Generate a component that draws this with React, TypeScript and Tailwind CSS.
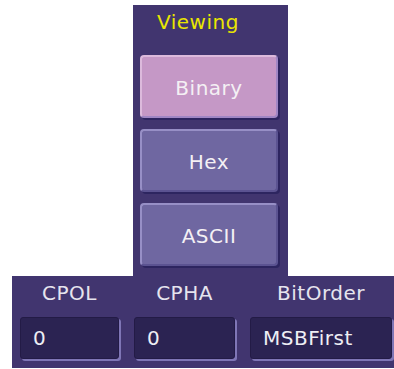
import React from 'react';

const font = { fontFamily: '"DejaVu Sans", Verdana, sans-serif' };

interface ModeButtonProps {
  label: string;
  active?: boolean;
}

const ModeButton: React.FC<ModeButtonProps> = ({ label, active }) => {
  const colors = active
    ? 'bg-[#c598c6] border-t-[#dcbadc] border-l-[#dcbadc] border-r-[#9f86c4] border-b-[#9f86c4]'
    : 'bg-[#6f67a1] border-t-[#978fc6] border-l-[#978fc6] border-r-[#5b5391] border-b-[#5b5391]';
  return (
    <div
      className={`h-[63px] w-[138px] rounded-[4px] border-2 ${colors} shadow-[2px_2px_0_#2d2560] flex items-center justify-center pt-[2px] text-[20px] tracking-[0.5px] text-[#f4f0f4]`}
    >
      {label}
    </div>
  );
};

interface FieldProps {
  label: string;
  value: string;
  width: string;
}

const Field: React.FC<FieldProps> = ({ label, value, width }) => (
  <div className={`${width} flex flex-col shrink-0`}>
    <div className="h-[34px] flex items-center justify-center text-[20px] tracking-[0.5px] text-[#e6e4ee]">
      {label}
    </div>
    <div className="mt-[7px] h-[42px] rounded-[3px] bg-[#2b2352] border border-[#231b46] shadow-[2px_2px_0_#7f76b6] flex items-center pl-[12px] text-[20px] tracking-[0.5px] text-[#eeeef4]">
      {value}
    </div>
  </div>
);

export default function App() {
  return (
    <div className="w-[394px] h-[369px] bg-white overflow-hidden flex flex-col" style={font}>
      {/* Viewing panel */}
      <div className="ml-[133px] mt-[5px] w-[155px] h-[271px] bg-[#41356f] flex flex-col pl-[7px]">
        <div className="h-[34px] flex items-center pl-[17px] text-[20px] tracking-[0.5px] text-[#e9e600]">
          Viewing
        </div>
        <div className="mt-[16px] flex flex-col gap-[11px]">
          <ModeButton label="Binary" active />
          <ModeButton label="Hex" />
          <ModeButton label="ASCII" />
        </div>
      </div>

      {/* SPI settings row */}
      <div className="ml-[12px] w-[382px] h-[92px] bg-[#41356f] flex pl-[8px] gap-[15px] overflow-hidden">
        <Field label="CPOL" value="0" width="w-[99px]" />
        <Field label="CPHA" value="0" width="w-[101px]" />
        <Field label="BitOrder" value="MSBFirst" width="w-[142px]" />
      </div>
    </div>
  );
}
